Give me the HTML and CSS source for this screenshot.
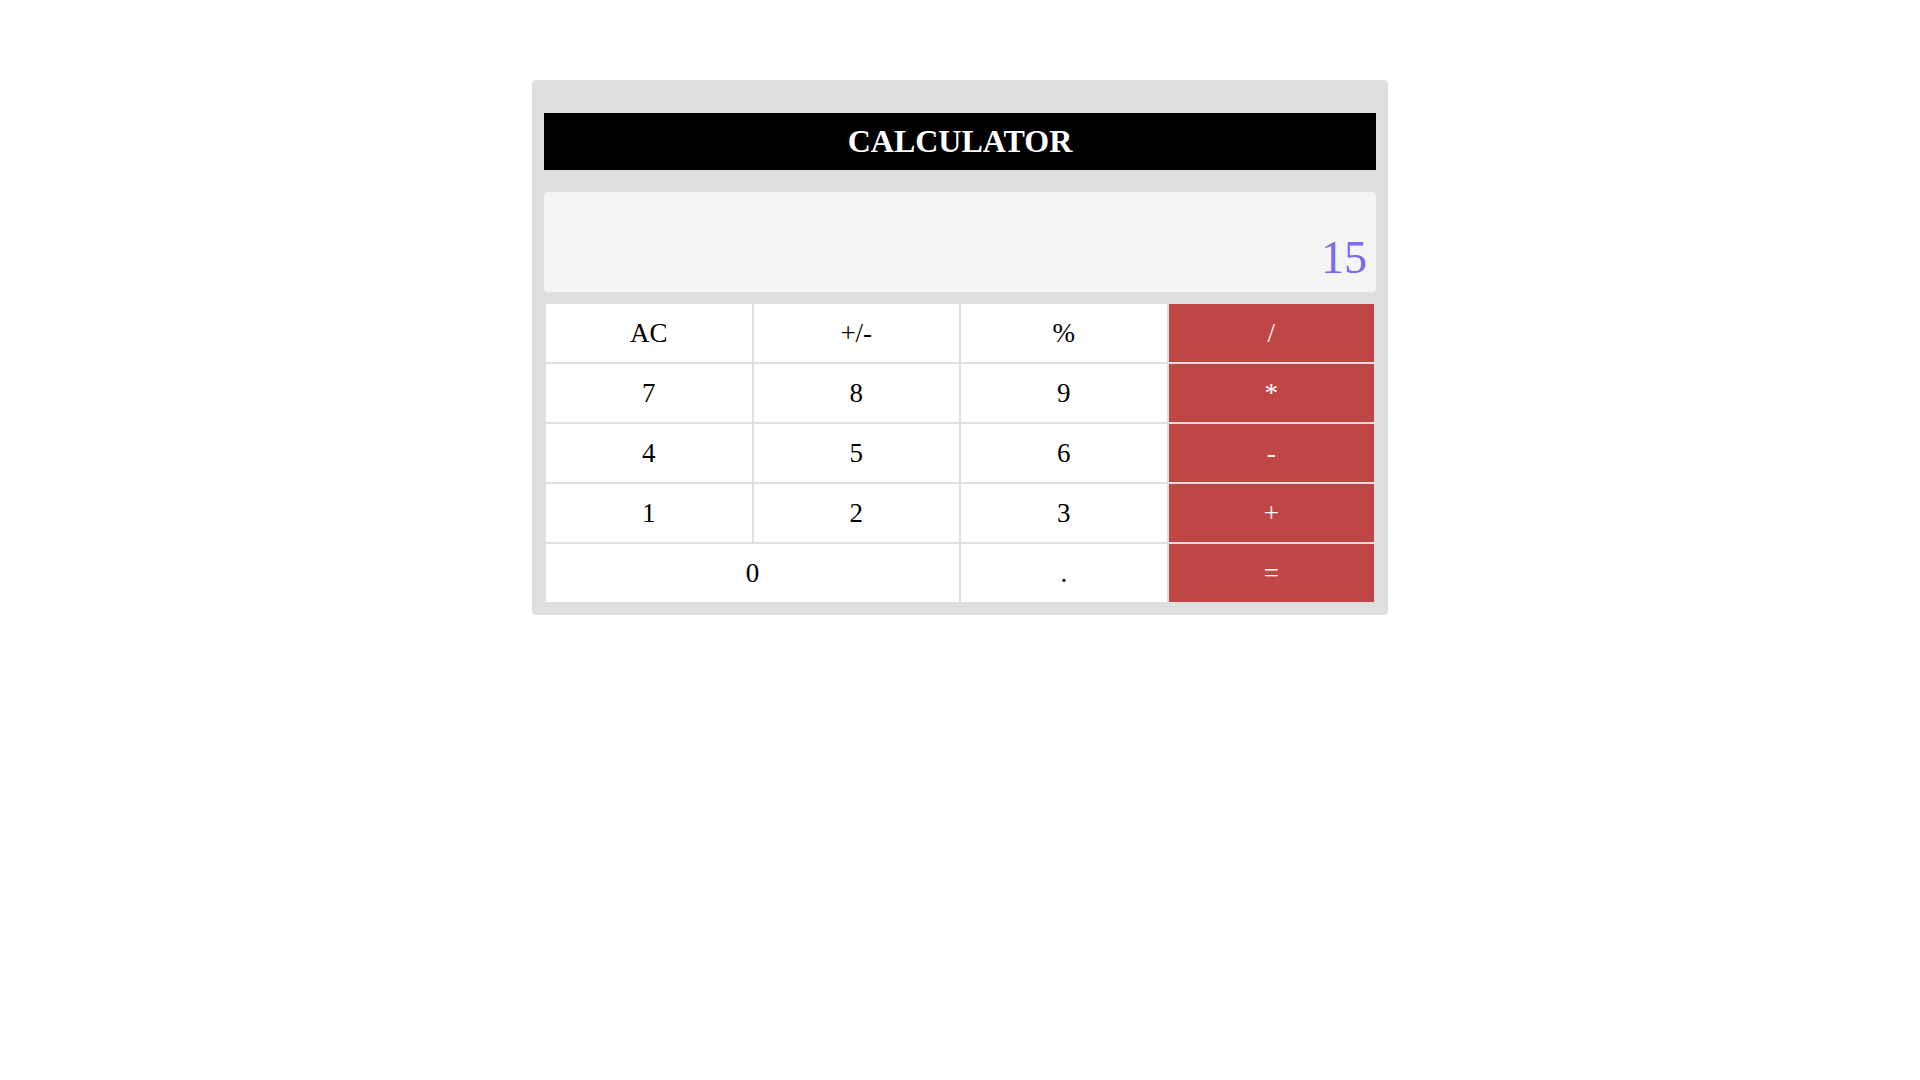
FILE: index.html
```html
<!DOCTYPE html>
<html lang="en">
<head>
<meta charset="utf-8">
<title>Calculator</title>
<link rel="stylesheet" href="styles.css">
</head>
<body>
<div class="calc">
  <h1 class="title">CALCULATOR</h1>
  <div class="display"><span class="value">15</span></div>
  <div class="keys">
    <div class="key">AC</div>
    <div class="key">+/-</div>
    <div class="key">%</div>
    <div class="key op">/</div>
    <div class="key">7</div>
    <div class="key">8</div>
    <div class="key">9</div>
    <div class="key op">*</div>
    <div class="key">4</div>
    <div class="key">5</div>
    <div class="key">6</div>
    <div class="key op">-</div>
    <div class="key">1</div>
    <div class="key">2</div>
    <div class="key">3</div>
    <div class="key op">+</div>
    <div class="key wide">0</div>
    <div class="key">.</div>
    <div class="key op">=</div>
  </div>
</div>
</body>
</html>
```

FILE: styles.css
```css
html, body {
  margin: 0;
  padding: 0;
  background: #ffffff;
  font-family: "Liberation Serif", "Times New Roman", serif;
}

.calc {
  width: 832px;
  margin: 80px auto 0;
  padding: 0 12px 11px;
  background: #e0dfe0;
  border-radius: 4px;
  display: flow-root;
}

.title {
  margin: 33px 0 0;
  padding: 10px 0;
  background: #000000;
  color: #ffffff;
  text-align: center;
  font-size: 32px;
  font-weight: bold;
  line-height: 37px;
}

.display {
  margin-top: 22px;
  height: 100px;
  box-sizing: border-box;
  background: #f4f4f4;
  border-radius: 4px;
  display: flex;
  justify-content: flex-end;
  align-items: flex-end;
  padding: 0 9px 9px 0;
}

.value {
  color: #7b68ee;
  font-size: 46px;
  line-height: 51px;
}

.keys {
  margin-top: 10px;
  display: grid;
  grid-template-columns: repeat(4, 1fr);
  grid-auto-rows: 58px;
  gap: 2px;
  padding: 2px;
}

.key {
  background: #ffffff;
  color: #000000;
  font-size: 27px;
  display: flex;
  align-items: center;
  justify-content: center;
}

.key.op {
  background: #c04545;
  color: #ffffff;
}

.key.wide {
  grid-column: span 2;
}
```
